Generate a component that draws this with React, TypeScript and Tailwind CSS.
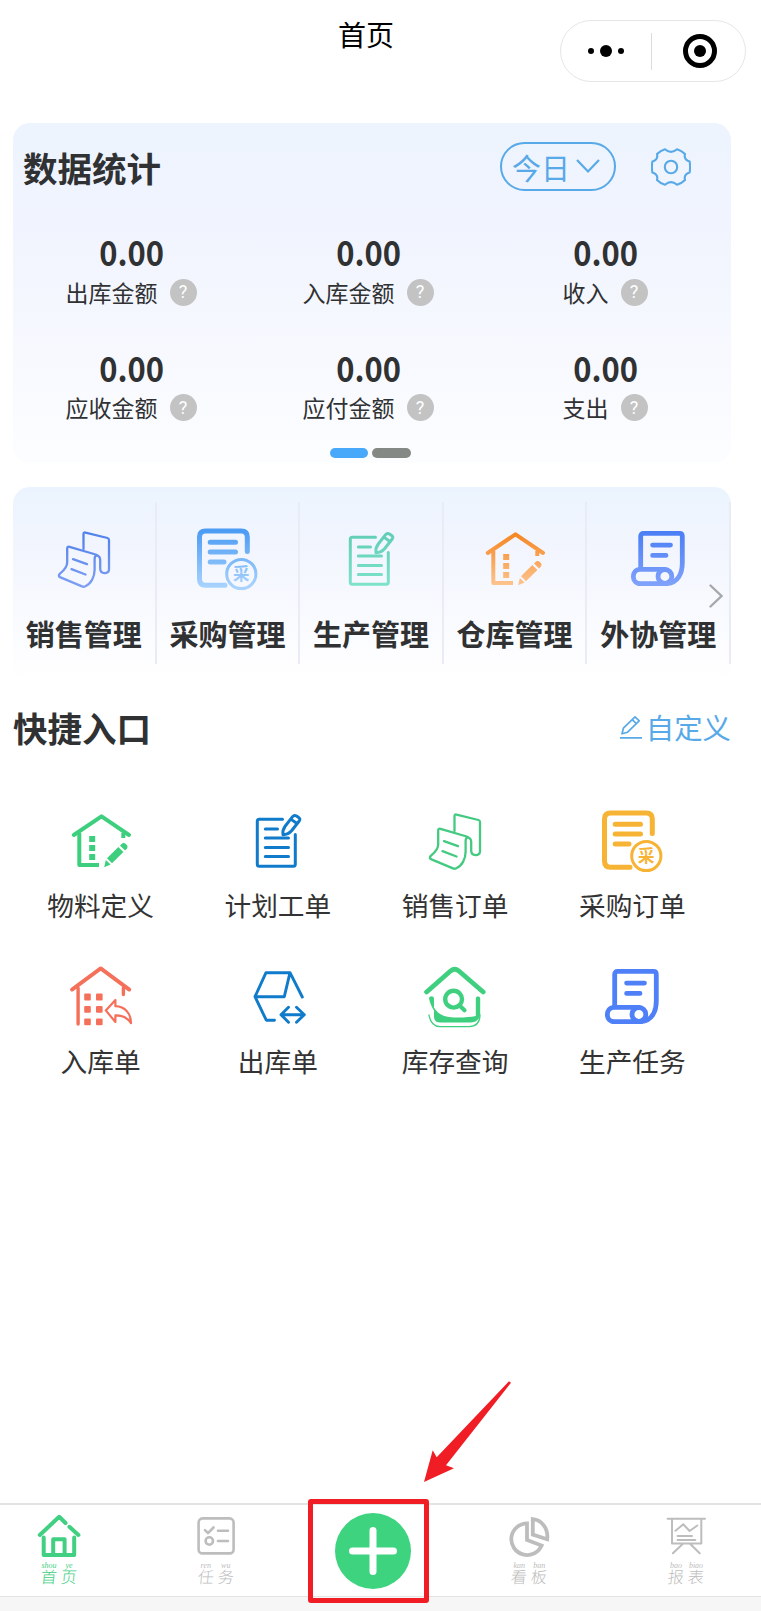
import type { ReactNode } from 'react';

type IconProps = { color?: string; to?: string; id?: string };

const stats = [
  { label: '出库金额', value: '0.00' },
  { label: '入库金额', value: '0.00' },
  { label: '收入', value: '0.00' },
  { label: '应收金额', value: '0.00' },
  { label: '应付金额', value: '0.00' },
  { label: '支出', value: '0.00' },
];

/* 64x64 line icon, painted with a vertical gradient when `to` is given */
function Icon({
  color = '#333',
  to,
  id,
  width = 3,
  children,
}: IconProps & { width?: number; children: (paint: string) => ReactNode }) {
  const paint = to ? `url(#${id})` : color;
  return (
    <svg
      width="64"
      height="64"
      viewBox="0 0 64 64"
      fill="none"
      stroke={paint}
      strokeWidth={width}
      strokeLinecap="round"
      strokeLinejoin="round"
    >
      {to && (
        <defs>
          <linearGradient id={id} gradientUnits="userSpaceOnUse" x1="0" y1="4" x2="0" y2="60">
            <stop offset="0" stopColor={color} />
            <stop offset="1" stopColor={to} />
          </linearGradient>
        </defs>
      )}
      {children(paint)}
    </svg>
  );
}

function SalesIcon(props: IconProps) {
  return (
    <Icon {...props} width={2.3}>
      {() => (
        <>
          <path d="M31.5 22V7Q31.5 5 33.5 5.6L55.5 11Q57 11.5 57 13V42.5C57 47.5 48.2 47.5 48.2 41.5V33C48.2 30 46.5 28.6 44 28.2" />
          <path d="M17.5 19.8L42 27Q45.5 28 44.5 28.2C43 28.8 42.6 30 42.6 32V43C42.6 50 39 57 33 59.5Q31.5 60 30 59.4L8.5 50.4Q5.5 49 8 46.6C12.5 43 15.2 40 15.2 35.5V21.5Q15.2 19.2 17.5 19.8Z" />
          <path d="M21 32.2L35 37.2M19.5 42.2L33.5 47.5" />
        </>
      )}
    </Icon>
  );
}

function PurchaseIcon(props: IconProps) {
  return (
    <Icon {...props} width={5}>
      {(paint) => (
        <>
          <path d="M30 58.2H10.5Q4.5 58.2 4.5 52V10Q4.5 4 10.5 4H46.3Q52.3 4 52.3 10V24.5" />
          <path d="M15.2 15.3H40.5M15.2 25H40.5M15.2 35H29" />
          <circle cx="46.3" cy="47" r="14.6" strokeWidth="3" />
          <text
            x="46.3"
            y="53.2"
            fontSize="16.5"
            textAnchor="middle"
            fill={paint}
            stroke="none"
            fontWeight="700"
            fontFamily="'Noto Sans CJK SC', sans-serif"
          >
            采
          </text>
        </>
      )}
    </Icon>
  );
}

function WorkOrderIcon(props: IconProps) {
  return (
    <Icon {...props} width={3}>
      {() => (
        <>
          <path d="M36.5 10.3H13.3Q11.3 10.3 11.3 12.3V55.3Q11.3 57.3 13.3 57.3H47.3Q49.3 57.3 49.3 55.3V25.5" />
          <path d="M19.3 19.9H31.5M19.3 29H42.5M19.3 38.4H42.5M19.3 47.4H42.5" />
          <path d="M37 25.7C36.5 22.5 37.4 19.5 39.3 17L46.6 7.6Q48.2 5.7 50.5 7L52.6 8.4Q54.8 10 53.2 12L45.8 21.5C43.5 24.2 40.5 25.6 37 25.7ZM45.5 10.6L50.3 14" />
        </>
      )}
    </Icon>
  );
}

function WarehouseIcon(props: IconProps) {
  return (
    <Icon {...props} width={4}>
      {(paint) => (
        <>
          <path d="M4.8 26L32.5 7.3L60 26" strokeWidth="4" />
          <path d="M10.3 24V56H30M54.3 24V29" strokeLinecap="butt" />
          <g fill={paint} stroke="none">
            <path d="M20.2 27h6v6h-6zM20.2 36h6v6h-6zM20.2 45h6v6h-6z" />
            <path d="M38 49.2L49.3 37.9L54.4 43L43 54.2Z" />
            <path d="M51 36.4L53.4 34.3Q55 33.4 56.6 34.8L58 36.3Q59.2 37.8 58 39.4L56 41.4Z" />
            <path d="M36.8 51L41.6 55.6L35.2 58.2Z" />
          </g>
        </>
      )}
    </Icon>
  );
}

function ScrollIcon(props: IconProps) {
  return (
    <Icon {...props} width={4.8}>
      {() => (
        <>
          <path d="M14.7 41V9.3Q14.7 6.4 17.6 6.4H53.4Q56.3 6.4 56.3 9.3V36C56.3 47 51.5 55.5 41 56.7" />
          <path d="M39 42.3H14.3C5 42.3 5 56.7 14.3 56.7H41" />
          <circle cx="38.9" cy="49.4" r="6.9" />
          <path d="M26.6 18.1H44.5M26.6 28.4H40" />
        </>
      )}
    </Icon>
  );
}

function InboundIcon(props: IconProps) {
  return (
    <Icon {...props} width={3.4}>
      {(paint) => (
        <>
          <path d="M3 24.6L31.7 3.4L60.3 24.6" strokeWidth="3.8" />
          <path d="M9.1 23V59M54.4 23V29.5" />
          <g fill={paint} stroke="none">
            <rect x="15.2" y="28.6" width="6.6" height="6.8" rx="1" />
            <rect x="27" y="28.6" width="6.6" height="6.8" rx="1" />
            <rect x="15.2" y="41" width="6.6" height="6.8" rx="1" />
            <rect x="27" y="41" width="6.6" height="6.8" rx="1" />
            <rect x="15.2" y="53.4" width="6.6" height="6.8" rx="1" />
            <rect x="27" y="53.4" width="6.6" height="6.8" rx="1" />
          </g>
          <path
            d="M36.8 45.4L46.4 35V41.2C56 41.4 62 48.5 62 58.2C58.5 52.8 53 50.2 46.4 50.4V57Z"
            strokeWidth="2.2"
          />
        </>
      )}
    </Icon>
  );
}

function OutboundIcon(props: IconProps) {
  return (
    <Icon {...props} width={2.9}>
      {() => (
        <>
          <path d="M56.3 32L44 7.7H20L9 31.7L20.3 55.2H28.5M9 31.7H38.3L44 7.7" />
          <path d="M35.2 49.7H58.3M42.5 42.3L35 49.7L42.5 57.2M50.5 42.3L58.3 49.7L50.5 57.2" />
        </>
      )}
    </Icon>
  );
}

function StockSearchIcon(props: IconProps) {
  return (
    <Icon {...props} width={4.8}>
      {(paint) => (
        <>
          <path d="M3.6 27L27.8 5.8Q31.7 2.6 35.6 5.8L60.2 27" />
          <circle cx="30.6" cy="34.2" r="8.4" strokeWidth="4.4" />
          <path d="M36.5 40.5L41.5 45.3" strokeWidth="4.2" />
          <path
            d="M6 33.4C6.2 30.6 10.8 30.6 11 33.4V42.5C14.5 48.4 19 51 26 52C35 53 45 52.5 52.8 51V33.4C53 30.8 57 30.8 57.2 33.4V49C56.6 54.4 53 57.4 48 57.4H17C12.6 57.4 11 55 11 51V45.5C9 42 6.8 38 6 33.4Z"
            fill={paint}
            stroke="none"
          />
          <path d="M6 50C7.3 57.5 11 61.6 17 61.6H46C53 61.6 56.8 57.6 57 50" strokeWidth="1.3" />
        </>
      )}
    </Icon>
  );
}

const modules = [
  { label: '销售管理', icon: <SalesIcon color="#4f80ea" to="#7f9ff3" id="m-sales" /> },
  { label: '采购管理', icon: <PurchaseIcon color="#4c9cf4" to="#a9d3fd" id="m-purchase" /> },
  { label: '生产管理', icon: <WorkOrderIcon color="#5fcdb4" to="#7fe3cc" id="m-work" /> },
  { label: '仓库管理', icon: <WarehouseIcon color="#f5831c" to="#fdc692" id="m-house" /> },
  { label: '外协管理', icon: <ScrollIcon color="#4a7ef5" to="#82a3fb" id="m-scroll" /> },
];

const shortcuts = [
  { label: '物料定义', icon: <WarehouseIcon color="#3ecf7e" /> },
  { label: '计划工单', icon: <WorkOrderIcon color="#0f7bca" /> },
  { label: '销售订单', icon: <SalesIcon color="#43ca80" /> },
  { label: '采购订单', icon: <PurchaseIcon color="#f7b334" /> },
  { label: '入库单', icon: <InboundIcon color="#f5705a" /> },
  { label: '出库单', icon: <OutboundIcon color="#0f7bca" /> },
  { label: '库存查询', icon: <StockSearchIcon color="#3fd07f" /> },
  { label: '生产任务', icon: <ScrollIcon color="#4f80f8" /> },
];

function TabIcon({ width, children }: { width: number; children: ReactNode }) {
  return (
    <svg
      width="44"
      height="44"
      viewBox="0 0 44 44"
      fill="none"
      stroke="currentColor"
      strokeWidth={width}
      strokeLinecap="round"
      strokeLinejoin="round"
    >
      {children}
    </svg>
  );
}

/* Tab caption: each character carries its pinyin on top */
function Tab({ chars, active, children }: { chars: string[][]; active?: boolean; children: ReactNode }) {
  return (
    <div className={`flex w-20 flex-col items-center pt-[9px] ${active ? 'text-[#41cf81]' : 'text-[#bdbdbd]'}`}>
      {children}
      <div className="mt-[5px] flex gap-[4px]">
        {chars.map(([pinyin, char]) => (
          <div key={char} className="flex w-[16px] flex-col items-center">
            <span className="font-['Liberation_Serif',serif] text-[8px] leading-[6px] italic">{pinyin}</span>
            <span className="-skew-x-6 text-[16px] leading-[15px] font-light">{char}</span>
          </div>
        ))}
      </div>
    </div>
  );
}

function Header() {
  return (
    <header className="flex h-[123px] items-start pr-[15px] pl-[338px]">
      <h1 className="mt-[20px] text-[28px] leading-[28px] text-black">首页</h1>
      <div className="mt-5 ml-auto flex h-[62px] w-[186px] items-center rounded-full border border-[#e6e6e6]">
        <div className="flex flex-1 items-center justify-center gap-[6px]">
          <i className="size-[6px] rounded-full bg-black" />
          <i className="size-[12px] rounded-full bg-black" />
          <i className="size-[6px] rounded-full bg-black" />
        </div>
        <div className="h-[37px] w-px bg-[#dcdcdc]" />
        <div className="flex flex-1 justify-center pl-[3px]">
          <div className="flex size-[34px] items-center justify-center rounded-full border-[5px] border-black">
            <i className="size-[12px] rounded-full bg-black" />
          </div>
        </div>
      </div>
    </header>
  );
}

function StatsCard() {
  return (
    <section className="h-[340px] rounded-[17px] bg-linear-to-b from-[#edf4fe] via-[#f1f4fe] via-30% to-[#fcfdff] pt-[19px]">
      <div className="flex h-[49px] items-center pr-[40px] pl-[10px]">
        <h2 className="pt-[2px] text-[34.5px] leading-none font-bold text-[#303133]">数据统计</h2>
        <button className="ml-auto flex h-[49px] w-[116px] items-center rounded-full border-2 border-[#57a9e8] pl-[10px] text-[#57a9e8]">
          <span className="pt-[2px] text-[29px] leading-none">今日</span>
          <svg className="ml-[6px]" width="24" height="15" viewBox="0 0 24 15" fill="none" stroke="currentColor" strokeWidth="2.2">
            <path d="M1 1L12 12.5L23 1" />
          </svg>
        </button>
        <svg
          className="ml-[35px]"
          width="40"
          height="40"
          viewBox="0 0 40 40"
          fill="none"
          stroke="#57a9e8"
          strokeWidth="2.1"
          strokeLinejoin="round"
        >
          <path d="M14 2.2Q20 7.5 26 2.2Q30.5 3.5 34 7Q32.5 12.5 38.6 14.4Q39.6 20 38.6 25.6Q32.5 27.5 34 33Q30.5 36.5 26 37.8Q20 32.5 14 37.8Q9.5 36.5 6 33Q7.5 27.5 1.4 25.6Q.4 20 1.4 14.4Q7.5 12.5 6 7Q9.5 3.5 14 2.2Z" />
          <circle cx="20" cy="20" r="6.2" />
        </svg>
      </div>
      <div className="mt-[43px] grid w-[711px] grid-cols-3 gap-y-[43.5px]">
        {stats.map((s) => (
          <div key={s.label} className="flex flex-col items-center text-[#303133]">
            <div className="scale-x-[.91] text-[34px] leading-[36px] font-bold">{s.value}</div>
            <div className="mt-2 flex h-7 items-center gap-[12px] pr-[1px]">
              <span className="text-[23px] leading-none">{s.label}</span>
              <span className="flex size-[27px] items-center justify-center rounded-full bg-[#c3c3c3] font-['Roboto',sans-serif] text-[18px] leading-none text-white">
                ?
              </span>
            </div>
          </div>
        ))}
      </div>
      <div className="mt-[26px] flex gap-1 pl-[317px]">
        <i className="h-[10px] w-[38px] rounded-full bg-[#48a9fa]" />
        <i className="h-[10px] w-[39px] rounded-full bg-[#858986]" />
      </div>
    </section>
  );
}

function ModuleCard() {
  return (
    <section className="relative mt-6 h-[194px] rounded-[17px] bg-linear-to-b from-[#ebf4fe] via-[#f2f5fe] via-30% to-white pt-[15px]">
      <div className="grid h-[162px] grid-cols-5">
        {modules.map((m) => (
          <div key={m.label} className="flex flex-col items-center border-r-2 border-[#e9ecf4] pt-[25px]">
            {m.icon}
            <span className="mt-[28px] text-[29px] leading-none font-bold whitespace-nowrap text-[#303133]">{m.label}</span>
          </div>
        ))}
      </div>
      <svg
        className="absolute top-[97px] right-[8px]"
        width="14"
        height="24"
        viewBox="0 0 14 24"
        fill="none"
        stroke="#a6a8ab"
        strokeWidth="2.4"
        strokeLinecap="round"
      >
        <path d="M1.5 1.5L12.5 12L1.5 22.5" />
      </svg>
    </section>
  );
}

function Shortcuts() {
  return (
    <section className="mt-[26px]">
      <div className="flex h-[40px] items-center justify-between">
        <h2 className="text-[34.5px] leading-none font-bold text-[#303133]">快捷入口</h2>
        <button className="flex items-center gap-[3px] text-[#57a9e8]">
          <svg width="24" height="24" viewBox="0 0 24 24" fill="none" stroke="currentColor" strokeWidth="1.7" strokeLinejoin="round">
            <path d="M1 22.8H23M3 18.8L4.4 13.2L16 1.8L20.2 5.8L8.6 17.2ZM13.2 4.6L17.4 8.6" />
          </svg>
          <span className="pt-px text-[28.4px] leading-none">自定义</span>
        </button>
      </div>
      <div className="mt-[62px] -ml-px grid w-[709px] grid-cols-4">
        {shortcuts.map((s) => (
          <div key={s.label} className="flex h-[156px] flex-col items-center">
            {s.icon}
            <span className="mt-[19px] text-[26.7px] leading-none text-[#333]">{s.label}</span>
          </div>
        ))}
      </div>
    </section>
  );
}

function TabBar() {
  return (
    <nav className="relative mt-auto h-[108px] bg-[#f6f6f6]">
      <div className="flex h-[94px] justify-between border-t-2 border-b border-[#e4e4e4] bg-white pr-[35px] pl-[19px]">
        <Tab chars={[['shou', '首'], ['ye', '页']]} active>
          <TabIcon width={4}>
            <path d="M2.8 21L22.2 2.8L28.5 9M32.4 12.8L41.4 21M6.7 23.5V41H37.2V23.5M16.2 40V25.2H27.6V40" />
          </TabIcon>
        </Tab>
        <Tab chars={[['ren', '任'], ['wu', '务']]}>
          <TabIcon width={2.6}>
            <rect x="4.6" y="4.4" width="35" height="35" rx="4" />
            <path d="M11 16.2L14 19.2L19.5 13.5M24 16.7H34M24 27H34" />
            <circle cx="15.3" cy="27" r="3.7" />
          </TabIcon>
        </Tab>
        <div className="flex w-20 justify-center pt-[8px]">
          <svg width="76" height="76" viewBox="0 0 76 76">
            <circle cx="38" cy="38" r="38" fill="#3dd37f" />
            <path d="M38 17.5V58.5M17.5 38H58.5" stroke="#fff" strokeWidth="7" strokeLinecap="round" />
          </svg>
        </div>
        <Tab chars={[['kan', '看'], ['ban', '板']]}>
          <TabIcon width={3.8}>
            <g strokeLinejoin="miter">
              <path d="M20 9.4A15.8 15.8 0 1 0 34.6 31.5L20 26Z" />
              <path d="M25.8 5.2C34.5 6 41.5 14 40.2 25.3L25.8 20.6Z" />
            </g>
          </TabIcon>
        </Tab>
        <Tab chars={[['bao', '报'], ['biao', '表']]}>
          <TabIcon width={2}>
            <path d="M3.6 4.7H41M8 4.7V29.5H37.3V4.7M18.7 30L8.9 39.3M26.3 30L35.7 39.3" />
            <path d="M11.5 16.7L19.3 10.3L25.6 17L33.3 11.5M13.6 21.9H28M13.6 25.9H31.3" />
          </TabIcon>
        </Tab>
      </div>
      {/* highlight frame and arrow around the add button */}
      <div className="absolute -top-[4px] left-[308px] h-[104px] w-[121px] rounded-[3px] border-[5px] border-[#f01d25]" />
      <svg className="absolute -top-[123px] left-[423px]" width="90" height="104" viewBox="0 0 90 104">
        <path d="M1 102L9.7 70.3L13.7 77.3L86 1.3L88 2.7L23 85.3L31 88.3Z" fill="#f01d25" />
      </svg>
    </nav>
  );
}

export default function App() {
  return (
    <div className="flex h-[1611px] w-[761px] flex-col overflow-hidden bg-white font-['Noto_Sans_CJK_SC',sans-serif]">
      <Header />
      <main className="w-[731px] pl-[13px]">
        <StatsCard />
        <ModuleCard />
        <Shortcuts />
      </main>
      <TabBar />
    </div>
  );
}
